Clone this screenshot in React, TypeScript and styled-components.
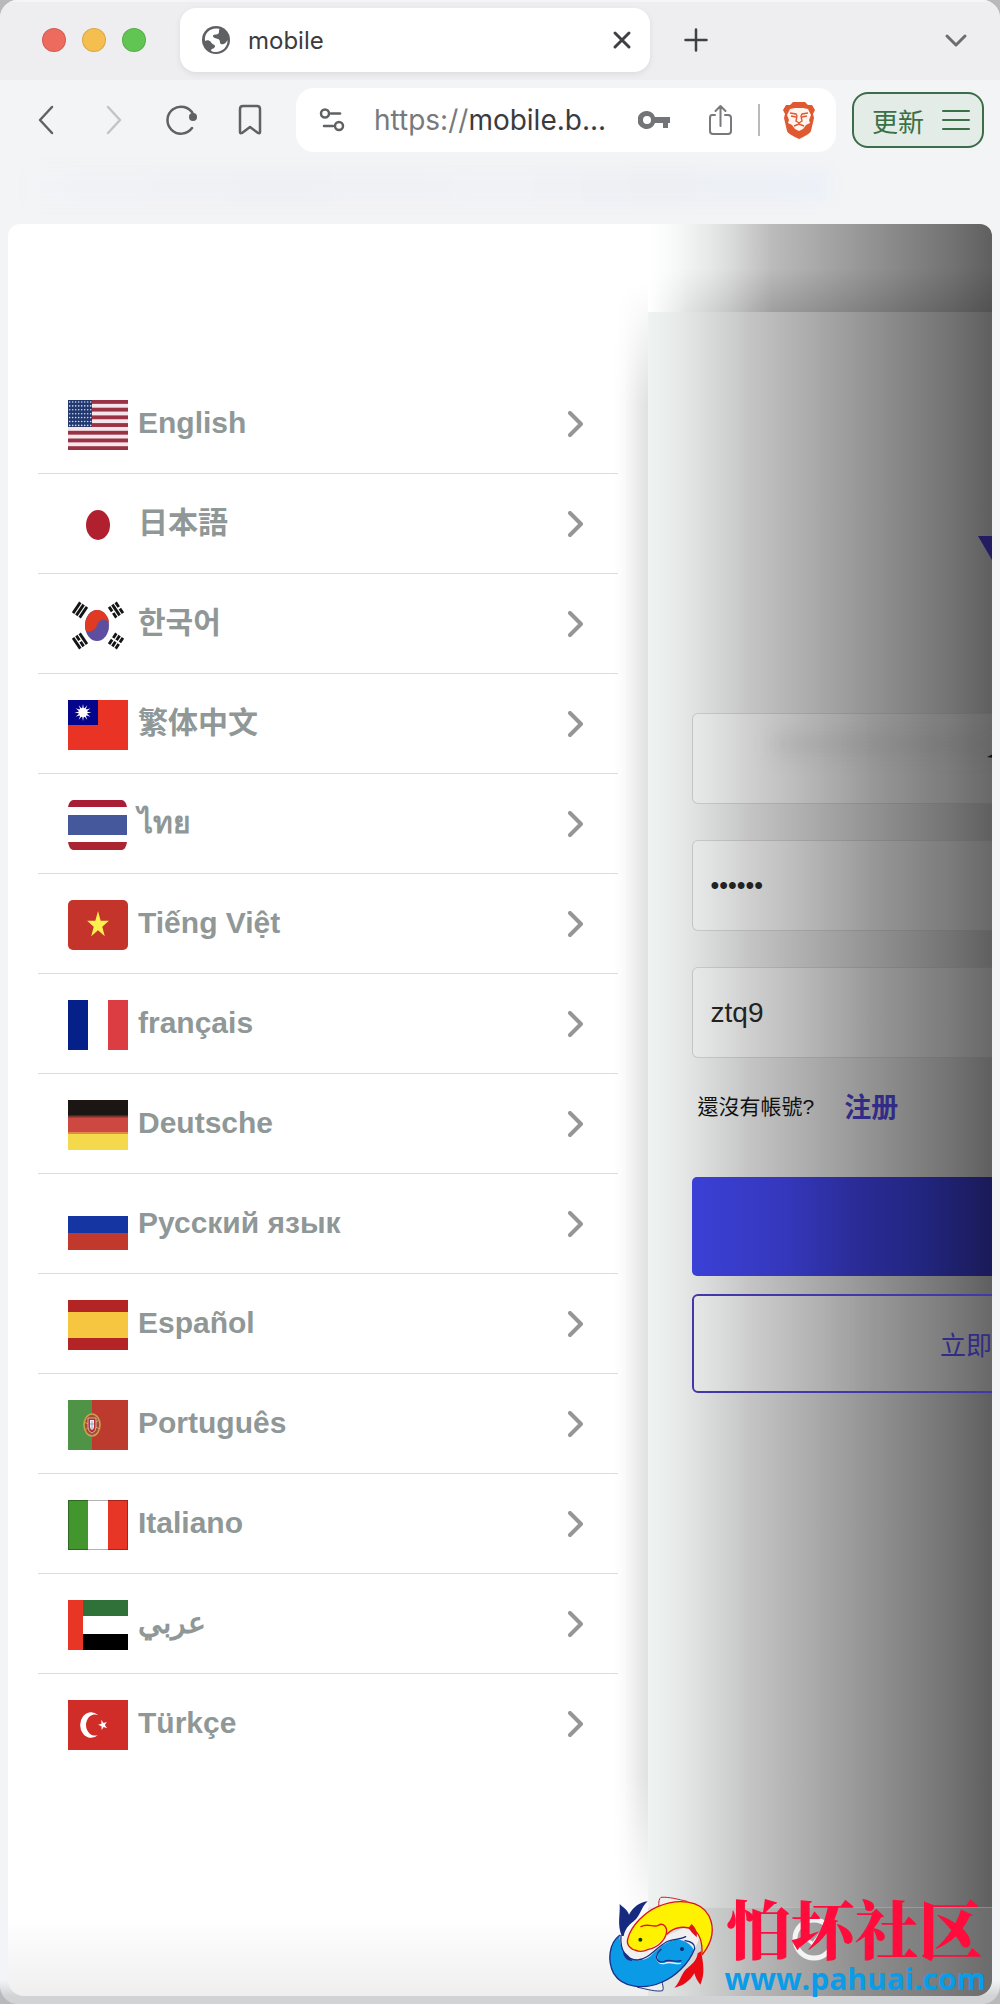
import {FC, ReactNode} from 'react';
import styled, { createGlobalStyle } from 'styled-components';

const GlobalStyle = createGlobalStyle`
* {
  box-sizing: border-box;
}
body {
  margin: 0;
  background: #b9b9bc;
  font-family: "Liberation Sans", "Noto Sans CJK TC", sans-serif;
}
button, input {
  font: inherit;
  color: inherit;
  margin: 0;
}
`

const uiFont = '"Inter", "Noto Sans CJK SC", sans-serif'

const Window = styled.div`
  position: relative;
  overflow: hidden;
  border-radius: 18px;
  background: linear-gradient(#f3f4f6 0, #f3f4f7 1980px, #d2d3d5 1996px);
`

/* ---------- browser bars ---------- */

const TabBar = styled.header`
  display: flex;
  align-items: center;
  height: 80px;
  padding: 0 28px 0 42px;
  background: #eeeef0;
  box-shadow: inset 0 2px 0 #f5f5f7;
  font-family: ${uiFont};
`

const Lights = styled.div`
  display: flex;
  gap: 16px;
  margin-right: 34px;
`

const Light = styled.span<{ $color: string }>`
  width: 24px;
  height: 24px;
  border-radius: 50%;
  border: 1px solid rgba(0, 0, 0, 0.12);
  background: ${(p) => p.$color};
`

const Tab = styled.div`
  display: flex;
  align-items: center;
  flex: 0 1 470px;
  height: 64px;
  padding: 0 16px 0 20px;
  border-radius: 16px;
  background: #fff;
  box-shadow: 0 2px 6px rgba(0, 0, 0, 0.08);
  font-size: 24px;
  color: #3b3b3e;
`

const TabTitle = styled.span`
  flex: 1;
  margin-left: 16px;
`

const IconButton = styled.button<{ $color?: string }>`
  display: flex;
  align-items: center;
  justify-content: center;
  padding: 0;
  border: 0;
  background: none;
  color: ${(p) => p.$color || '#5f6164'};
`

const NewTab = styled(IconButton)`
  margin-left: 30px;
`

const TabMenu = styled(IconButton)`
  margin-left: auto;
`

const Toolbar = styled.nav`
  display: flex;
  align-items: center;
  height: 80px;
  padding: 0 16px 0 30px;
  font-family: ${uiFont};
`

const NavButtons = styled.div`
  display: flex;
  gap: 36px;
  margin-right: 30px;
`

const Address = styled.div`
  display: flex;
  align-items: center;
  flex: 1;
  min-width: 0;
  height: 64px;
  padding: 0 20px 0 22px;
  border-radius: 18px;
  background: #fff;
`

const Url = styled.div`
  flex: 1;
  margin-left: 28px;
  font-size: 28px;
  color: #3b3b3e;
  white-space: nowrap;

  span {
    color: #77797c;
  }
`

const AddressTools = styled.div`
  display: flex;
  align-items: center;
  gap: 22px;
`

const KeyButton = styled(IconButton)`
  margin-right: 12px;
`

const Divider = styled.span`
  width: 2px;
  height: 32px;
  background: #b9babb;
`

const UpdateButton = styled.button`
  display: flex;
  align-items: center;
  gap: 18px;
  height: 56px;
  margin-left: 16px;
  padding: 0 12px 0 18px;
  border: 2px solid #3c6c48;
  border-radius: 16px;
  background: #e3ece6;
  color: #3a7045;
  font-size: 26px;
`

const BookmarkBar = styled.div`
  height: 64px;
  padding: 8px 170px 20px 30px;
`

const BookmarkHaze = styled.div`
  height: 36px;
  background: linear-gradient(90deg, #f2f3f6, #eff0f4 30%, #f1f2f6 60%, #edeff3 78%, #edf1f7);
  filter: blur(6px);
`

/* ---------- page ---------- */

const Page = styled.main`
  display: flex;
  margin: 0 8px 8px;
  overflow: hidden;
  border-radius: 12px 12px 16px 16px;
`

const Drawer = styled.aside`
  position: relative;
  flex: none;
  width: 65%;
  padding: 150px 30px 222px;
  background: linear-gradient(#fff calc(100% - 80px), #efeff0);

  /* soft shade along the inner edge */
  &::after {
    content: '';
    position: absolute;
    top: 60px;
    right: 0;
    bottom: 60px;
    width: 34px;
    background: linear-gradient(90deg, rgba(0, 0, 0, 0), rgba(0, 0, 0, 0.02) 30%, rgba(0, 0, 0, 0.12));
    mask-image: linear-gradient(transparent, #000 120px, #000 calc(100% - 160px), transparent);
  }
`

const LanguageList = styled.ul`
  margin: 0;
  padding: 0;
  list-style: none;
`

const LanguageItem = styled.li`
  border-bottom: 1px solid #dcdddd;

  &:last-child {
    border-bottom-color: transparent;
  }
`

const LanguageLink = styled.a`
  display: flex;
  align-items: center;
  height: 99px;
  padding: 3px 34px 0 30px;
  color: #8f9797;
  text-decoration: none;
`

const Flag = styled.svg`
  display: block;
  flex: none;
  width: 60px;
  height: 50px;
`

const LanguageName = styled.span`
  flex: 1;
  margin-left: 10px;
  padding-bottom: 5px;
  font-family: "Liberation Sans", "Noto Sans CJK SC", "Noto Sans", sans-serif;
  font-size: 30px;
  line-height: 40px;
  font-weight: 700;
`

const shade = `linear-gradient(90deg, #eff4f3 0, #e5e8e7 10%, #d3d5d4 21%, #c5c5c5 29%,
  #b0b0b0 44%, #9b9b9b 59%, #868686 74%, #737373 88%, #5f5f5f 100%)`

const Backdrop = styled.section`
  flex: 1;
  min-width: 0;
  overflow: hidden;
  display: flex;
  flex-direction: column;
  background: ${shade};
`

const TitleBand = styled.div`
  height: 88px;
  background:
    linear-gradient(90deg, #fff, rgba(255, 255, 255, 0.5) 12%, rgba(255, 255, 255, 0) 36%),
    linear-gradient(rgba(0, 0, 0, 0) 50%, rgba(0, 0, 0, 0.15));
`

/* the login page is pushed aside by the drawer, so only its left half shows */
const LoginPage = styled.div`
  width: 200%;
  flex: 1;
  padding: 224px 44px 0;
  display: flex;
  flex-direction: column;
`

const Logo = styled.svg`
  align-self: center;
  margin-bottom: 153px;
`

const Field = styled.label`
  display: block;
  position: relative;
  margin-bottom: 36px;

  svg {
    position: absolute;
    left: 292px;
    top: 38px;
  }
`

const Input = styled.input`
  display: block;
  width: 100%;
  height: 91px;
  padding: 0 18px;
  border: 1px solid rgba(70, 70, 70, 0.2);
  border-radius: 6px;
  outline: 0;
  background: linear-gradient(90deg, rgba(255, 255, 255, 0.25), rgba(255, 255, 255, 0.06) 30%);
  font-size: ${(p) => (p.type === 'password' ? 25 : 28)}px;
  color: #222;
`

const Smudge = styled.span`
  position: absolute;
  left: 80px;
  top: 20px;
  width: 220px;
  height: 22px;
  background: rgba(70, 70, 70, 0.1);
  filter: blur(10px);
`

const SignUpRow = styled.p`
  display: flex;
  align-items: center;
  gap: 30px;
  height: 40px;
  margin: -9px 0 52px;
  padding-left: 6px;
  font-size: 21px;
  color: #111;
`

const SignUpLink = styled.a`
  font-family: "Noto Sans CJK SC", sans-serif;
  font-size: 27px;
  font-weight: 700;
  color: #322c86;
  text-decoration: none;
`

const Submit = styled.button`
  height: 99px;
  margin-bottom: 18px;
  border: 0;
  border-radius: 5px;
  background: linear-gradient(90deg, #3b40d6, #3538bd 15%, #2a2b95 28%, #222680 38%, #1a1a58 50%);
`

const Outline = styled.button`
  height: 99px;
  border: 2px solid #4338a8;
  border-radius: 6px;
  background: linear-gradient(90deg, rgba(255, 255, 255, 0.2), rgba(255, 255, 255, 0.06) 30%);
  font-family: "Noto Sans CJK SC", sans-serif;
  font-size: 26px;
  color: #322c86;
`

const FooterBar = styled.div`
  display: flex;
  align-items: center;
  justify-content: center;
  height: 89px;
  padding: 0 30px 26px 18px;
  border-top: 1px solid rgba(255, 255, 255, 0.2);
  background: linear-gradient(90deg, rgba(0, 0, 0, 0.05), rgba(0, 0, 0, 0.06) 60%, rgba(255, 255, 255, 0.08));
`

/* ---------- site mark, lies over the window ---------- */

const SiteMark = styled.a`
  position: absolute;
  right: 14px;
  bottom: 4px;
  display: flex;
  align-items: flex-end;
  gap: 4px;
  text-decoration: none;
`

const SiteText = styled.span`
  display: flex;
  flex-direction: column;
`

const SiteName = styled.strong`
  padding-left: 2px;
  font-family: "Noto Serif CJK SC", "Noto Sans CJK SC", serif;
  font-size: 64px;
  line-height: 64px;
  font-weight: 900;
  color: #ff0b3c;
`

const SiteUrl = styled.span`
  font-family: "Open Sans", "Noto Sans", sans-serif;
  font-size: 30px;
  line-height: 42px;
  font-weight: 700;
  color: #0a9ce8;
`

/* ---------- flags ---------- */

const starPoints = '0,-10 2.3,-3.1 9.5,-3.1 3.7,1.2 5.9,8.1 0,3.8 -5.9,8.1 -3.7,1.2 -9.5,-3.1 -2.3,-3.1'

const trigram = (x: number, y: number, angle: number, broken: boolean[]) => (
  <g transform={`translate(${x} ${y}) rotate(${angle})`} stroke="#151515" strokeWidth="2.8">
    {broken.map((b, i) => (
      <path key={i} d={b ? `M-6.5 ${i * 4 - 4}H-1M1 ${i * 4 - 4}H6.5` : `M-6.5 ${i * 4 - 4}H6.5`} />
    ))}
  </g>
)

const stripes = [0, 1, 2, 3, 4, 5, 6]
const starCols = [0, 1, 2, 3, 4, 5, 6, 7]

const languages: { name: string; code: string; flag: ReactNode }[] = [
  { name: 'English', code: 'en', flag: <>
    <rect width="60" height="50" fill="#f4e6ea" />
    {stripes.map((i) => <rect key={i} y={i * 7.7} width="60" height="3.85" fill="#983244" />)}
    <rect width="24" height="27" fill="#22386f" />
    {stripes.map((r) => starCols.map((c) => <circle key={`${r}-${c}`} cx={1.7 + c * 3} cy={2 + r * 3.9} r="0.8" fill="#d5dcea" />))}
  </> },
  { name: '日本語', code: 'ja', flag: <ellipse cx="30" cy="25" rx="12" ry="15" fill="#b0202f" /> },
  { name: '한국어', code: 'ko', flag: <>
    <ellipse cx="29" cy="25.5" rx="12" ry="15.5" fill="#5d4ea0" />
    <path d="M18 31C15 20 21 10 29 10C37 10 41 18 41 23C37 17 31 19 29 25C27 31 21 33 18 31Z" fill="#e03a22" />
    {trigram(12, 10, -56, [false, false, false])}
    {trigram(48, 10, 56, [true, false, true])}
    {trigram(12, 41, 56, [false, true, false])}
    {trigram(48, 41, -56, [true, true, true])}
  </> },
  { name: '繁体中文', code: 'zh-Hant', flag: <>
    <rect width="60" height="50" fill="#e93325" />
    <rect width="30" height="25" fill="#05058c" />
    {[0, 30, 60, 90, 120, 150].map((a) => <path key={a} d="M0 -8.5L1.6 0L0 8.5L-1.6 0Z" transform={`translate(15 12.5) rotate(${a})`} fill="#fff" />)}
    <circle cx="15" cy="12.5" r="4.5" fill="#fff" />
  </> },
  { name: 'ไทย', code: 'th', flag: <>
    <path d="M5 0H54Q58 1 59 7H0Q1 1 5 0Z" fill="#a81f35" />
    <rect y="15" width="59" height="20" fill="#45589c" />
    <path d="M0 42H59Q58 49 54 50H5Q1 49 0 42Z" fill="#ab2432" />
  </> },
  { name: 'Tiếng Việt', code: 'vi', flag: <>
    <rect width="60" height="50" rx="5" fill="#c4342a" />
    <polygon points={starPoints} transform="translate(30 25) scale(1.15 1.4)" fill="#fcf04f" />
  </> },
  { name: 'français', code: 'fr', flag: <>
    <rect width="20" height="50" fill="#06208a" />
    <rect x="40" width="20" height="50" fill="#dc3d42" />
  </> },
  { name: 'Deutsche', code: 'de', flag: <>
    <rect width="60" height="17" fill="#1b1614" />
    <rect y="16" width="60" height="17" fill="#cc4840" />
    <rect y="33" width="60" height="17" fill="#f4d94d" />
    <rect y="15.5" width="60" height="2" fill="#7d332e" />
    <rect y="32" width="60" height="2" fill="#e08a45" />
  </> },
  { name: 'Русский язык', code: 'ru', flag: <>
    <rect y="16" width="60" height="17" fill="#1535a2" />
    <rect y="33" width="60" height="17" fill="#c1392c" />
  </> },
  { name: 'Español', code: 'es', flag: <>
    <rect width="60" height="50" fill="#b32525" />
    <rect y="12" width="60" height="26" fill="#f7c640" />
  </> },
  { name: 'Português', code: 'pt', flag: <>
    <rect width="60" height="50" fill="#bd3a2f" />
    <rect width="24" height="50" fill="#4f9346" />
    <ellipse cx="24" cy="25" rx="8" ry="11" fill="#a34a3a" stroke="#c9a24a" strokeWidth="1.6" />
    <path d="M16 22L32 29M17 30L31 20" stroke="#c9a24a" strokeWidth="1" />
    <path d="M20 18H28V27Q28 32 24 33Q20 32 20 27Z" fill="#b5302c" stroke="#dcc9c0" strokeWidth="0.8" />
    <path d="M22 20H26V27Q26 29 24 30Q22 29 22 27Z" fill="#eef0f4" />
    <path d="M24 21V29M22 24H26" stroke="#7f93be" strokeWidth="0.8" />
  </> },
  { name: 'Italiano', code: 'it', flag: <>
    <rect width="20" height="50" fill="#43952d" />
    <rect x="20" width="20" height="50" fill="#fff" />
    <rect x="40" width="20" height="50" fill="#e73526" />
    <rect x="0.5" y="0.5" width="59" height="49" fill="none" stroke="#000" strokeOpacity="0.3" />
  </> },
  { name: 'عربي', code: 'ar', flag: <>
    <rect x="15" width="45" height="16" fill="#30713a" />
    <rect x="15" y="34" width="45" height="16" fill="#000" />
    <rect width="15" height="50" fill="#e73526" />
  </> },
  { name: 'Türkçe', code: 'tr', flag: <>
    <rect width="60" height="50" fill="#d02c28" />
    <path d="M30 15A11 12.8 0 1 0 30 35A9 10.6 0 1 1 30 15Z" fill="#fff" />
    <polygon points={starPoints} transform="translate(35 25) rotate(-18) scale(0.48 0.55)" fill="#fff" />
  </> },
]

const Chevron: FC = () => (
  <svg width="16" height="28" viewBox="0 0 16 28" fill="none" stroke="#969696" strokeWidth="4" strokeLinecap="round" strokeLinejoin="round">
    <path d="M2 2L13 13L2 24" />
  </svg>
)

const FishLogo: FC = () => (
  <svg width="120" height="112" viewBox="0 0 360 336" strokeLinejoin="round" strokeLinecap="round">
    {/* pale body shared by both fish */}
    <path d="M66 140C60 180 68 212 100 216C140 218 170 180 200 160C225 146 270 160 272 190C290 172 300 150 290 124C240 96 150 190 110 185C84 180 76 160 98 110Z" fill="#f2eff0" />
    <path d="M62 144C48 108 58 80 56 48C66 58 80 66 84 80C96 58 115 43 140 40C118 60 120 82 98 100C82 112 72 124 68 144Z" fill="#162a80" />
    <path d="M300 190C308 230 312 260 298 290C290 280 284 270 280 256C266 280 246 294 220 299C240 280 238 256 262 238C280 224 288 212 290 196Z" fill="#ea0a14" />
    <path d="M174 56C172 42 174 32 180 28C205 26 230 34 258 40" fill="#f3eeee" stroke="#c9202b" strokeWidth="3" />
    <path d="M110 298C140 304 165 312 185 308C190 298 182 290 184 278" fill="#eef0f4" stroke="#27357f" strokeWidth="3" />

    <path d="M80 163C78 135 110 92 150 68C205 34 280 28 315 72C346 114 334 168 304 200C304 160 290 120 248 118C220 116 204 134 190 148C172 170 145 186 110 190C92 188 80 178 80 163Z" fill="#fff200" />
    <path d="M108 188C88 184 74 170 81 150C92 112 130 74 170 56C230 30 300 36 324 84C346 130 326 172 304 200" fill="none" stroke="#d8141f" strokeWidth="4" />
    <path d="M120 116C140 104 158 120 172 112C186 102 200 118 196 136C190 160 168 180 142 184C130 190 116 192 104 187" fill="none" stroke="#e0141f" strokeWidth="4" />
    <path d="M198 138C220 116 256 112 278 126C298 138 304 164 303 196" fill="none" stroke="#e0141f" strokeWidth="4" />
    <path d="M272 108C284 120 290 132 287 148C276 138 268 128 262 120Z" fill="#e0141f" />

    <path d="M56 142C24 166 18 218 38 256C64 300 130 306 184 282C222 266 262 230 278 186C270 166 244 152 220 156C186 164 164 190 144 208C116 226 82 216 68 190C58 172 56 158 56 142Z" fill="#0b9be6" />
    <path d="M56 142C24 166 18 218 38 256C64 300 130 306 184 282C222 266 262 230 281 182C282 166 268 160 252 158" fill="none" stroke="#1b2f86" strokeWidth="4" />
    <path d="M60 142C56 190 78 216 110 216C142 214 164 180 196 162C212 152 238 156 254 146" fill="none" stroke="#1b2f86" strokeWidth="4" />
    <path d="M170 196C162 214 172 230 192 226C208 218 222 230 238 226" fill="none" stroke="#e7f1fa" strokeWidth="4" />
    <path d="M180 184C156 206 168 228 190 220C206 212 222 224 240 218" fill="none" stroke="#1b2f86" strokeWidth="4" />
    <path d="M66 190C66 206 76 218 94 220C88 208 78 198 66 190Z" fill="#1b2f86" />
    <circle cx="118" cy="155" r="6" fill="#113c2b" />
    <circle cx="243" cy="183" r="6" fill="#0a2a70" />
  </svg>
)

const line = { fill: 'none', stroke: 'currentColor', strokeLinecap: 'round', strokeLinejoin: 'round' } as const

const BrowserBars: FC = () => (
  <>
    <TabBar>
      <Lights>
        <Light $color="#ed6a5e" />
        <Light $color="#f5bf4f" />
        <Light $color="#61c554" />
      </Lights>
      <Tab>
        <svg width="32" height="32" viewBox="0 0 32 32">
          <circle cx="16" cy="16" r="14" fill="#5f6063" />
          <path d="M5 17C4 9 10 4 17 4.5L20 5C18 7 20 8 18 10C16 11 13 10 13 12C13 14 16 14 18 15C21 16 19 19 21 20C24 21 26 19 27.5 16C28 23 22 28 16 28C13 28 11 27.5 11 26C12 24 15 25 15 22C15 20 12 21 11 18C9 16 7 16 5 17Z" fill="#fff" />
          <path d="M20 5C18 7 20 9 22 9C22 12 25 13 28 12C27 9 24 6 20 5Z" fill="#5f6063" />
        </svg>
        <TabTitle>mobile</TabTitle>
        <IconButton aria-label="Close tab" $color="#3f4043">
          <svg width="24" height="24" viewBox="0 0 24 24" {...line} strokeWidth="3"><path d="M5 5L19 19M19 5L5 19" /></svg>
        </IconButton>
      </Tab>
      <NewTab aria-label="New tab" $color="#3f4043">
        <svg width="32" height="32" viewBox="0 0 32 32" {...line} strokeWidth="2.5"><path d="M16 5.5V26.5M5.5 16H26.5" /></svg>
      </NewTab>
      <TabMenu aria-label="Search tabs" $color="#6b6d70">
        <svg width="32" height="24" viewBox="0 0 32 24" {...line} strokeWidth="3"><path d="M7 8L16 17L25 8" /></svg>
      </TabMenu>
    </TabBar>
    <Toolbar>
      <NavButtons>
        <IconButton aria-label="Back">
          <svg width="32" height="32" viewBox="0 0 32 32" {...line} strokeWidth="2.5"><path d="M22 3L10 16L22 29" /></svg>
        </IconButton>
        <IconButton aria-label="Forward" $color="#c3c4c6">
          <svg width="32" height="32" viewBox="0 0 32 32" {...line} strokeWidth="2.5"><path d="M10 3L22 16L10 29" /></svg>
        </IconButton>
        <IconButton aria-label="Reload">
          <svg width="32" height="32" viewBox="0 0 32 32" {...line} strokeWidth="2.5">
            <path d="M26 24A13.5 13.5 0 1 1 27 10" />
            <circle cx="27" cy="13" r="4" fill="currentColor" stroke="none" />
          </svg>
        </IconButton>
        <IconButton aria-label="Bookmark">
          <svg width="32" height="32" viewBox="0 0 32 32" {...line} strokeWidth="2.5"><path d="M6 5Q6 2 9 2H23Q26 2 26 5V28Q26 30 24 29L16 23L8 29Q6 30 6 28Z" /></svg>
        </IconButton>
      </NavButtons>
      <Address>
        <IconButton aria-label="Site settings">
          <svg width="28" height="28" viewBox="0 0 28 28" {...line} strokeWidth="2.5">
            <circle cx="7" cy="7.5" r="4" /><path d="M13 7.5H22" />
            <circle cx="21" cy="20" r="4" /><path d="M6 20H15" />
          </svg>
        </IconButton>
        <Url><span>https://</span>mobile.b...</Url>
        <AddressTools>
          <KeyButton aria-label="Passwords" $color="#737477">
            <svg width="32" height="20" viewBox="0 0 32 20" fill="currentColor">
              <path fillRule="evenodd" d="M9 1A9 9 0 1 0 17 13H25V18H30V13H32V7H17A9 9 0 0 0 9 1ZM9 6A4 4 0 1 1 9 14A4 4 0 0 1 9 6Z" />
            </svg>
          </KeyButton>
          <IconButton aria-label="Share" $color="#77797c">
            <svg width="32" height="32" viewBox="0 0 32 32" {...line} strokeWidth="2">
              <path d="M11 11H8Q6 11 6 14V27Q6 30 9 30H24Q27 30 27 27V14Q27 11 24 11H21M16.5 22V3M11.5 7L16.5 2L21.5 7" />
            </svg>
          </IconButton>
          <Divider />
          <IconButton aria-label="Brave Shields">
            <svg width="34" height="40" viewBox="0 0 34 40">
              <path d="M11 2H23L26 5L30 5L33 10L31 14L32 18L29 31Q28 34 17 39Q6 34 5 31L2 18L3 14L1 10L4 5L8 5Z" fill="#df5a30" />
              <path d="M8 9L13 8H21L26 9L29 15L27 20L28 23L24 25L21 29L17 31L13 29L10 25L6 23L7 20L5 15Z" fill="#fff5ee" />
              <path d="M8 13L14 14L15 16L14 21L17 23L20 21L19 16L20 14L26 13M12 26L17 24L22 26" fill="none" stroke="#df5a30" strokeWidth="1.4" />
              <path d="M9 16L14 17M25 16L20 17" stroke="#df5a30" strokeWidth="1.6" />
            </svg>
          </IconButton>
        </AddressTools>
      </Address>
      <UpdateButton>
        更新
        <svg width="28" height="24" viewBox="0 0 28 24" {...line} strokeWidth="2"><path d="M1 3H27M1 12H27M1 21H27" /></svg>
      </UpdateButton>
    </Toolbar>
    <BookmarkBar><BookmarkHaze /></BookmarkBar>
  </>
)

export default function App() {
  return (
    <Window>
      <GlobalStyle />
      <BrowserBars />
      <Page>
        <Drawer>
          <LanguageList>
            {languages.map((l) => (
              <LanguageItem key={l.code}>
                <LanguageLink href={`#${l.code}`}>
                  <Flag viewBox="0 0 60 50">{l.flag}</Flag>
                  <LanguageName lang={l.code}>{l.name}</LanguageName>
                  <Chevron />
                </LanguageLink>
              </LanguageItem>
            ))}
          </LanguageList>
        </Drawer>
        <Backdrop>
          <TitleBand />
          <LoginPage>
            <Logo width="28" height="24" viewBox="0 0 28 24"><polygon points="0,0 28,0 14,24" fill="#231c60" /></Logo>
            <Field>
              <Smudge />
              <Input aria-label="帳號" />
              <svg width="16" height="12" viewBox="0 0 16 12"><path d="M3 6L9 3L15 6L9 7Z" fill="#111" /></svg>
            </Field>
            <Field><Input type="password" aria-label="密碼" defaultValue="123456" /></Field>
            <Field><Input aria-label="驗證碼" defaultValue="ztq9" /></Field>
            <SignUpRow>還沒有帳號?<SignUpLink href="#register">注册</SignUpLink></SignUpRow>
            <Submit aria-label="登录" />
            <Outline>立即注册</Outline>
          </LoginPage>
          <FooterBar>
            <svg width="44" height="44" viewBox="0 0 44 44" fill="none" stroke="#f4f4f4">
              <circle cx="22" cy="22" r="19" strokeWidth="5" />
              <path d="M16 23L21 27L29 16" strokeWidth="3" />
            </svg>
          </FooterBar>
        </Backdrop>
      </Page>
      <SiteMark href="#home">
        <FishLogo />
        <SiteText>
          <SiteName>怕坏社区</SiteName>
          <SiteUrl>www.pahuai.com</SiteUrl>
        </SiteText>
      </SiteMark>
    </Window>
  )
}
